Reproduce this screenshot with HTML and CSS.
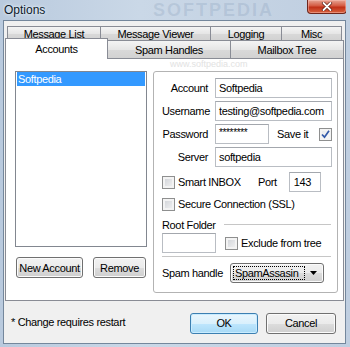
FILE: index.html
```html
<!DOCTYPE html>
<html lang="en">
<head>
    <meta charset="UTF-8">
    <meta name="viewport" content="width=device-width, initial-scale=1.0">
    <title>Options</title>
    <link rel="stylesheet" href="styles.css">
</head>
<body>

<div class="window">
    <!-- Title bar -->
    <div class="titlebar">
        <span class="title">Options</span>
        <span class="watermark-big">SOFTPEDIA</span>
        <div class="close-btn">
            <svg width="12" height="9" viewBox="0 0 12 9">
                <path d="M2.5 1 L9.5 8 M9.5 1 L2.5 8" stroke="#5a1a10" stroke-width="3.2" stroke-linecap="round"/>
                <path d="M2.5 1 L9.5 8 M9.5 1 L2.5 8" stroke="#fff" stroke-width="1.8" stroke-linecap="round"/>
            </svg>
        </div>
    </div>

    <div class="client">
        <div class="tabs">
            <div class="tab-row back">
                <div class="tab tab-msglist">Message List</div>
                <div class="tab tab-viewer">Message Viewer</div>
                <div class="tab tab-logging">Logging</div>
                <div class="tab tab-misc">Misc</div>
            </div>
            <div class="tab-row front">
                <div class="tab active tab-accounts">Accounts</div>
                <div class="tab tab-spam">Spam Handles</div>
                <div class="tab tab-mailbox">Mailbox Tree</div>
            </div>

            <div class="panel">
                <!-- Account list -->
                <div class="left-col">
                    <div class="listbox">
                        <div class="list-item selected">Softpedia</div>
                    </div>
                    <div class="list-buttons">
                        <button class="btn btn-new">New Account</button>
                        <button class="btn btn-remove">Remove</button>
                    </div>
                </div>

                <!-- Account settings -->
                <div class="groupbox">
                    <div class="field-row">
                        <span class="field-label">Account</span>
                        <div class="text-input wide">Softpedia</div>
                    </div>
                    <div class="field-row">
                        <span class="field-label">Username</span>
                        <div class="text-input wide">testing@softpedia.com</div>
                    </div>
                    <div class="field-row">
                        <span class="field-label">Password</span>
                        <div class="text-input narrow password">********</div>
                        <span class="save-label">Save it</span>
                        <span class="checkbox checked">
                            <svg width="11" height="11" viewBox="0 0 11 11">
                                <path d="M2 5.5 L4.5 8.2 L9 1.8" fill="none" stroke="#3158a8" stroke-width="1.7"/>
                            </svg>
                        </span>
                    </div>
                    <div class="field-row">
                        <span class="field-label">Server</span>
                        <div class="text-input wide">softpedia</div>
                    </div>

                    <div class="field-row smart-row">
                        <div class="check-field smart-check">
                            <span class="checkbox"></span>
                            <span>Smart INBOX</span>
                        </div>
                        <span class="port-label">Port</span>
                        <div class="text-input port">143</div>
                    </div>
                    <div class="check-field ssl-row">
                        <span class="checkbox"></span>
                        <span>Secure Connection (SSL)</span>
                    </div>

                    <div class="group-heading">
                        <span>Root Folder</span>
                        <span class="rule"></span>
                    </div>
                    <div class="field-row root-row">
                        <div class="text-input narrow"></div>
                        <div class="check-field exclude-check">
                            <span class="checkbox"></span>
                            <span>Exclude from tree</span>
                        </div>
                    </div>

                    <div class="separator"></div>

                    <div class="field-row spam-row">
                        <span class="spam-label">Spam handle</span>
                        <div class="combo">
                            <span class="combo-text">SpamAssasin</span>
                            <span class="combo-arrow">
                                <svg width="7" height="4" viewBox="0 0 7 4"><path d="M0 0 H7 L3.5 4 Z" fill="#000"/></svg>
                            </span>
                        </div>
                    </div>
                </div>
            </div>
        </div>

        <!-- Bottom bar -->
        <div class="footer">
            <span class="note">* Change requires restart</span>
            <div class="footer-buttons">
                <button class="btn btn-default btn-ok">OK</button>
                <button class="btn btn-cancel">Cancel</button>
            </div>
        </div>
    </div>

    <span class="watermark-small">www.softpedia.com</span>
</div>

</body>
</html>
```

FILE: styles.css
```css
* {
    box-sizing: border-box;
}
body {
    margin: 0;
    font-family: "Liberation Sans", Arial, sans-serif;
    font-size: 11px;
    letter-spacing: -0.35px;
    color: #000;
}
.window {
    position: relative;
    width: 350px;
    height: 347px;
    padding: 0 4px 3px 3px;
    background: linear-gradient(to right, #b9cade, #cad8e7 40%, #bfcee0);
    display: flex;
    flex-direction: column;
    overflow: hidden;
}

/* Title bar */
.titlebar {
    position: relative;
    height: 20px;
    display: flex;
    align-items: flex-start;
    overflow: hidden;
}
.title {
    margin: 3px 0 0 1px;
    font-size: 12px;
    letter-spacing: 0;
    line-height: 14px;
    color: #0c1a2a;
    text-shadow: 0 0 4px #e8f0f8, 0 0 2px #e8f0f8;
    position: relative;
    z-index: 1;
}
.watermark-big {
    position: absolute;
    left: 150px;
    top: 0;
    font-size: 18px;
    line-height: 20px;
    font-weight: bold;
    letter-spacing: 2px;
    color: rgba(120, 145, 175, 0.22);
}
.close-btn {
    position: relative;
    margin: 0 -1px 0 auto;
    width: 40px;
    height: 14px;
    border: 1px solid #6e261c;
    border-top: none;
    border-radius: 0 0 4px 4px;
    background: linear-gradient(#e6a595, #d45a42 45%, #c03018 55%, #d8633f);
    box-shadow: inset 0 0 0 1px rgba(255, 200, 190, 0.45);
    display: flex;
    align-items: center;
    justify-content: center;
}
.watermark-small {
    position: absolute;
    left: 170px;
    top: 59px;
    font-size: 9px;
    line-height: 10px;
    letter-spacing: 0;
    color: #e2e2e2;
}

/* Client area */
.client {
    flex: 1;
    border: 1px solid #74879c;
    background: #f0f0f0;
    display: flex;
    flex-direction: column;
}
.tabs {
    margin: 5px 0 0 1px;
    width: 339px;
}
.tab-row {
    display: flex;
}
.tab-row.back {
    height: 14px;
    padding-left: 2px;
}
.tab-row.front {
    height: 18px;
}
.tab {
    border: 1px solid #898c95;
    border-bottom: none;
    margin-right: -1px;
    background: linear-gradient(#f4f4f4, #e6e6e6 50%, #d9d9d9 51%, #d2d2d2);
    display: flex;
    align-items: center;
    justify-content: center;
    white-space: nowrap;
}
.tab-row.back .tab {
    line-height: 12px;
    padding-top: 1px;
}
.tab.active {
    position: relative;
    z-index: 1;
    align-self: flex-start;
    height: 21px;
    margin-top: -2px;
    background: #fff;
}
.tab-msglist { width: 94px; }
.tab-viewer { width: 111px; }
.tab-logging { width: 72px; }
.tab-misc { width: 61px; }
.tab-accounts { width: 103px; }
.tab-spam { width: 124px; }
.tab-mailbox { width: 114px; }

.panel {
    height: 243px;
    border: 1px solid #898c95;
    background: #fff;
    display: flex;
    gap: 6px;
    padding: 12px 0 0 9px;
}

/* Account list */
.left-col {
    width: 132px;
}
.listbox {
    height: 176px;
    border: 1px solid #828790;
    padding: 0 1px;
}
.list-item {
    height: 14px;
    line-height: 14px;
    padding-left: 1px;
}
.list-item.selected {
    background: #3399ff;
    color: #fff;
}
.list-buttons {
    display: flex;
    gap: 10px;
    margin-top: 10px;
    padding-left: 1px;
}

/* Buttons */
.btn {
    height: 21px;
    padding: 0;
    border: 1px solid #707070;
    border-radius: 3px;
    background: linear-gradient(#f2f2f2, #ebebeb 50%, #dddddd 51%, #cfcfcf);
    box-shadow: inset 0 0 0 1px #fbfbfb;
    font-family: inherit;
    font-size: 11px;
    letter-spacing: inherit;
    color: #000;
}
.btn-new { width: 67px; }
.btn-remove { width: 53px; }
.btn-default {
    border-color: #3c7fb1;
    background: linear-gradient(#eaf6fd, #d9f0fc 50%, #bee6fd 51%, #a7d9f5);
    box-shadow: inset 0 0 0 1px #c9ecff;
}
.btn-ok { width: 68px; }
.btn-cancel { width: 70px; }

/* Group box */
.groupbox {
    width: 185px;
    height: 222px;
    border: 1px solid #b3b3b3;
    border-radius: 3px;
    padding: 6px 5px 0 8px;
}
.field-row {
    display: flex;
    align-items: center;
    height: 20px;
    margin-bottom: 3px;
}
.field-label {
    width: 46px;
    margin-right: 7px;
    text-align: right;
}
.text-input {
    height: 20px;
    border: 1px solid #b9bdc3;
    border-top-color: #a3a7ad;
    background: #fff;
    padding-left: 3px;
    display: flex;
    align-items: center;
    white-space: nowrap;
}
.text-input.wide { width: 117px; }
.text-input.narrow { width: 54px; }
.text-input.port {
    width: 32px;
    padding-left: 4px;
}
.text-input.password {
    align-items: flex-start;
    padding-top: 2px;
    font-size: 10px;
}
.save-label {
    margin-left: 8px;
}
.checkbox {
    width: 13px;
    height: 13px;
    flex: none;
    border: 1px solid #8e8f8f;
    background: linear-gradient(135deg, #cdd0d5, #f5f5f5);
    box-shadow: inset 0 0 0 2px #f3f3f3;
    display: flex;
    align-items: center;
    justify-content: center;
}
.checkbox.checked {
    margin-left: auto;
    background: linear-gradient(135deg, #e3e6ea, #fbfbfb);
}
.check-field {
    display: flex;
    align-items: center;
    gap: 3px;
}
.smart-row {
    margin-top: 5px;
    margin-bottom: 0;
}
.smart-check { width: 96px; }
.port-label { margin-right: 12px; }
.ssl-row {
    height: 16px;
    margin-top: 4px;
}
.group-heading {
    display: flex;
    align-items: center;
    height: 13px;
    margin-top: 6px;
}
.group-heading .rule {
    flex: 1;
    margin: 0 1px 0 8px;
    border-top: 1px solid #c6c6c6;
}
.root-row {
    margin-top: 2px;
    margin-bottom: 0;
}
.exclude-check {
    margin-left: 9px;
}
.separator {
    margin: 3px 1px 0 0;
    border-top: 1px solid #c6c6c6;
}
.spam-row {
    margin-top: 6px;
}
.spam-label {
    width: 68px;
}
.combo {
    width: 94px;
    height: 20px;
    border: 1px solid #707070;
    border-radius: 3px;
    background: linear-gradient(#f2f2f2, #ebebeb 50%, #dddddd 51%, #cfcfcf);
    box-shadow: inset 0 0 0 1px #fbfbfb;
    padding: 2px;
    display: flex;
    align-items: center;
}
.combo-text {
    flex: 1;
    height: 100%;
    border: 1px dotted #000;
    padding-left: 1px;
    display: flex;
    align-items: center;
}
.combo-arrow {
    width: 16px;
    display: flex;
    justify-content: center;
}

/* Bottom bar */
.footer {
    flex: 1;
    display: flex;
    align-items: center;
    padding: 0 9px 0 7px;
}
.note {
    margin-right: auto;
}
.footer-buttons {
    display: flex;
    gap: 8px;
    margin-top: 2px;
}
```
